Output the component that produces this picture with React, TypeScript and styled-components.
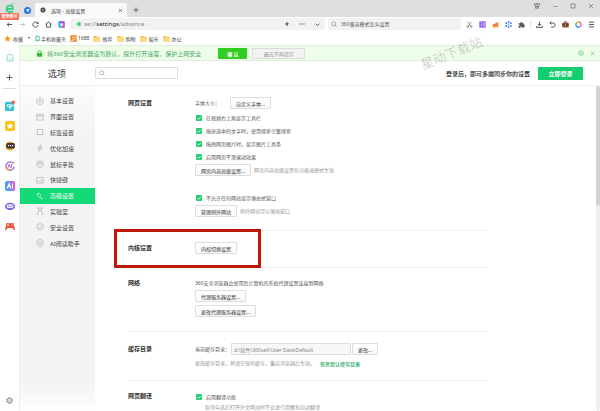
import React from "react";
import styled, { createGlobalStyle, css } from "styled-components";

const Global = createGlobalStyle`
  *, *::before, *::after { box-sizing: border-box; }
  html, body { margin: 0; overflow: hidden; }
  body, button, input {
    font-family: "Noto Sans", "Noto Sans CJK SC", sans-serif;
    font-size: 5px;
    color: #444;
  }
  button { padding: 0; border: 0; background: none; white-space: nowrap; }
  button, a { cursor: pointer; }
`;

const Browser = styled.div`
  display: flex;
  flex-direction: column;
  height: 100vh;
  background: #fff;
  overflow: hidden;
`;

/* ---- title bar ---- */
const TitleBar = styled.header`
  display: flex;
  align-items: flex-end;
  height: 17px;
  flex: none;
  background: #dfdfdf;
`;
const Account = styled.button`
  position: relative;
  width: 19px;
  height: 17px;
  display: flex;
  justify-content: center;
  align-items: flex-start;
  padding-top: 3px;
`;
const AccountBadge = styled.span`
  position: absolute;
  left: 0;
  top: 13px;
  width: 19px;
  height: 7px;
  line-height: 7px;
  font-size: 4px;
  font-weight: 700;
  text-align: center;
  color: #fff;
  background: #f5735c;
  z-index: 2;
`;
const PinnedTab = styled.button`
  width: 16px;
  height: 14px;
  display: grid;
  place-items: center;
`;
const Tab = styled.div`
  display: flex;
  align-items: center;
  gap: 5px;
  width: 92px;
  height: 14px;
  padding: 0 4px 0 5px;
  background: #f9f9f9;
  border-radius: 2px 2px 0 0;
`;
const TabTitle = styled.span`
  flex: 1;
  color: #444;
`;
const NewTab = styled.button`
  width: 17px;
  height: 14px;
  display: grid;
  place-items: center;
`;
const WindowControls = styled.div`
  display: flex;
  align-self: flex-start;
  margin-left: auto;
`;

const IconButton = styled.button<{ $w?: number; $h?: number }>`
  display: grid;
  place-items: center;
  flex: none;
  width: ${(p) => p.$w ?? 13}px;
  height: ${(p) => p.$h ?? 12}px;
`;

/* ---- toolbar ---- */
const Toolbar = styled.div`
  display: flex;
  align-items: center;
  height: 14px;
  flex: none;
  padding: 0 2px 0 3px;
`;
const Address = styled.div`
  flex: 1;
  display: flex;
  align-items: center;
  height: 12px;
  margin: 0 3px;
  padding-left: 5px;
  gap: 2px;
  background: #f2f2f2;
  border-radius: 2px;
`;
const Url = styled.span`
  flex: 1;
  font-size: 6px;
  color: #888;
  b { font-weight: 400; color: #222; }
`;
const Search = styled.label`
  display: flex;
  align-items: center;
  gap: 4px;
  width: 133px;
  height: 12px;
  padding-left: 3px;
  margin-right: 2px;
  background: #f2f2f2;
  border-radius: 2px;
`;
const BareInput = styled.input`
  flex: 1;
  min-width: 0;
  height: 10px;
  line-height: 10px;
  padding: 0;
  border: 0;
  outline: 0;
  background: none;
  color: #555;
`;
const Divider = styled.span`
  width: 1px;
  height: 6px;
  margin: 0 2px;
  background: #ddd;
`;

/* ---- bookmarks ---- */
const Bookmarks = styled.nav`
  display: flex;
  align-items: center;
  gap: 4px;
  height: 14px;
  flex: none;
  padding-left: 4px;
`;
const Bookmark = styled.a<{ $gap?: number }>`
  display: flex;
  align-items: center;
  gap: ${(p) => p.$gap ?? 1}px;
  color: #444;
  text-decoration: none;
`;

/* ---- side rail ---- */
const Main = styled.div`
  display: flex;
  flex: 1;
  min-height: 0;
`;
const Rail = styled.aside`
  display: flex;
  flex-direction: column;
  align-items: center;
  width: 20px;
  flex: none;
  border-right: 1px solid #eee;
  padding: 3px 0;
`;
const RailLine = styled.hr`
  width: 13px;
  height: 1px;
  margin: 2px 0 7px;
  border: 0;
  background: #ddd;
`;
const RailApps = styled.div`
  display: grid;
`;
const RailBottom = styled.div`
  margin-top: auto;
`;

/* ---- page ---- */
const Page = styled.div`
  position: relative;
  flex: 1;
  min-width: 0;
  display: flex;
  flex-direction: column;
`;
const Banner = styled.div`
  display: flex;
  align-items: center;
  height: 16px;
  flex: none;
  padding: 0 2px 0 16px;
  background: #effee9;
  border-top: 1px solid #e2efdf;
  border-bottom: 1px solid #dcefd8;
`;
const BannerText = styled.span`
  margin: 0 17px 0 4px;
  font-size: 6px;
  color: #43a568;
`;
const BannerButton = styled.button<{ $primary?: boolean }>`
  height: 11px;
  margin-right: 5px;
  border-radius: 1px;
  ${(p) =>
    p.$primary
      ? css`width: 29px; color: #fff; font-weight: 700; background: #31cc22;`
      : css`width: 53px; color: #999; background: #f3f3f3; border: 1px solid #d9dfd8;`}
`;
const BannerEnd = styled.div`
  display: flex;
  margin-left: auto;
`;
const PageHeader = styled.div`
  display: flex;
  align-items: center;
  height: 25px;
  flex: none;
  padding: 0 17px 0 28px;
  border-bottom: 1px solid #eee;
`;
const Title = styled.h1`
  width: 47px;
  margin: 0;
  font-size: 9px;
  font-weight: 400;
  color: #333;
`;
const OptionSearch = styled.label`
  display: flex;
  align-items: center;
  gap: 4px;
  width: 83px;
  height: 12px;
  padding-left: 3px;
  border: 1px solid #ddd;
  border-radius: 1px;
`;
const LoginText = styled.span`
  margin: 0 8px 0 auto;
  font-size: 6px;
  font-weight: 500;
  color: #222;
`;
const LoginButton = styled.button`
  width: 45px;
  height: 13px;
  border-radius: 1px;
  font-size: 6px;
  font-weight: 700;
  color: #fff;
  background: #13ce6f;
`;
const Body = styled.div`
  display: flex;
  flex: 1;
  min-height: 0;
`;
const Sidebar = styled.nav`
  width: 75px;
  flex: none;
  padding-top: 7px;
  background: linear-gradient(#fcfcfc, #f3f3f3 50px, #f3f3f3 calc(100% - 30px), #fff);
`;
const SideList = styled.ul`
  display: grid;
  grid-auto-rows: 1fr;
  height: 158px;
  margin: 0;
  padding: 0;
  list-style: none;
`;
const SideLink = styled.a<{ $active?: boolean }>`
  display: flex;
  align-items: center;
  gap: 6px;
  height: 100%;
  padding-left: 16px;
  font-size: 6px;
  text-decoration: none;
  color: ${(p) => (p.$active ? "#fff" : "#444")};
  background: ${(p) => (p.$active ? "#14d977" : "none")};
  svg { color: ${(p) => (p.$active ? "#bff5d9" : "#aaa")}; }
`;
const Content = styled.main`
  flex: 1;
  min-width: 0;
  padding: 0 108px 0 33px;
  overflow: hidden;
`;
const Section = styled.section<{ $top: number; $bottom: number }>`
  position: relative;
  display: grid;
  grid-template-columns: 67px 1fr;
  padding: ${(p) => p.$top}px 0 ${(p) => p.$bottom}px;
  border-bottom: 1px solid #f0f0f0;
`;
const SectionTitle = styled.h2`
  margin: 0;
  font-size: 6px;
  line-height: 12px;
  font-weight: 700;
  color: #333;
`;
const Fields = styled.div`
  display: flex;
  flex-direction: column;
`;
const Row = styled.div<{ $gap?: number; $before?: number }>`
  display: flex;
  align-items: center;
  min-height: 12px;
  gap: ${(p) => p.$gap ?? 3}px;
  margin-top: ${(p) => p.$before ?? 0}px;
  white-space: nowrap;
`;
const Text = styled.p`
  margin: 0;
  line-height: 12px;
  white-space: nowrap;
  color: #555;
`;
const Hint = styled.span<{ $indent?: boolean }>`
  line-height: 9px;
  color: #999;
  padding-left: ${(p) => (p.$indent ? 10 : 0)}px;
`;
const PlainButton = styled.button`
  height: 12px;
  padding: 0 5px;
  border: 1px solid #ddd;
  border-radius: 1px;
  background: linear-gradient(#fff, #f8f8f8);
  color: #333;
`;
const CheckLabel = styled.label<{ $before?: number }>`
  display: flex;
  align-items: center;
  gap: 4px;
  height: 13px;
  margin-top: ${(p) => p.$before ?? 0}px;
  padding-left: 1px;
  white-space: nowrap;
  color: #555;
`;
const Checkbox = styled.input`
  appearance: none;
  width: 6px;
  height: 6px;
  margin: 0;
  border-radius: 1px;
  border: 1px solid #bbb;
  &:checked {
    border: 0;
    background: #1fd170 url("data:image/svg+xml,%3Csvg xmlns='http://www.w3.org/2000/svg' viewBox='0 0 12 12'%3E%3Cpath d='M2.5 6l2.6 2.6 4.5-5' fill='none' stroke='white' stroke-width='1.6'/%3E%3C/svg%3E") center / 6px 6px no-repeat;
  }
`;
const PathInput = styled.input`
  width: 120px;
  height: 12px;
  line-height: 10px;
  padding: 0 2px;
  border: 1px solid #ddd;
  background: #f7f7f7;
  color: #888;
`;
const RestoreLink = styled.a`
  margin-left: 2px;
  color: #2cab68;
  text-decoration: none;
  font-weight: 500;
`;
const Highlight = styled.div`
  position: absolute;
  left: -14px;
  top: -2px;
  width: 147px;
  height: 39px;
  border: 3px solid #bd1809;
  pointer-events: none;
  z-index: 1;
`;
const Scrollbar = styled.div`
  width: 4px;
  flex: none;
  background: #efefef;
  border-radius: 2px;
`;
const Thumb = styled.div`
  height: 37%;
  border-radius: 2px;
  background: #d2d2d2;
`;
const Watermark = styled.span`
  position: absolute;
  right: 116px;
  top: 0;
  font-family: "Noto Sans CJK SC", sans-serif;
  font-size: 13px;
  line-height: 16px;
  color: rgba(80, 80, 80, 0.27);
  transform: rotate(-22deg);
  pointer-events: none;
`;

/* ---- icons ---- */
const shapes: Record<string, React.ReactNode> = {
  back: <path d="M21 12H4M11 5l-7 7 7 7" />,
  forward: <path d="M3 12h17M13 5l7 7-7 7" />,
  reload: <path d="M20 8a9 9 0 1 0 1 6M21 3v6h-6" />,
  house: <path d="M2 11L12 3l10 8M5 9v12h14V9" />,
  homeRail: <><path d="M3 10a9 9 0 0 1 18 0v11H3z" /><path d="M8 14q4 4 8 0" /></>,
  plus: <path d="M12 2v20M2 12h20" />,
  close: <path d="M4 4l16 16M20 4L4 20" />,
  minus: <path d="M3 12h18" />,
  square: <path d="M4 4h16v16H4z" />,
  skin: <path d="M2 3h20v6h-4v12H6V9H2zM8 3q4 6 8 0M10 12h4v5h-4z" />,
  search: <><circle cx="11" cy="11" r="8" /><path d="M17 17l5 5" /></>,
  bolt: <path d="M14 1L4 14h7l-2 9 11-14h-8z" fill="currentColor" stroke="none" />,
  flash: <path d="M14 2L5 13h6l-2 9 10-12h-7z" />,
  dots: <path d="M2 12h4M10 12h4M18 12h4" strokeWidth="4" />,
  chevron: <path d="M3 8l9 9 9-9" />,
  caret: <path d="M4 8h16l-8 9z" fill="currentColor" stroke="none" />,
  scissors: <><path d="M5 2l11 15M19 2L8 17" /><circle cx="6" cy="19" r="3" /><circle cx="18" cy="19" r="3" /></>,
  download: <path d="M12 2v14M6 10l6 6 6-6M2 17v5h20v-5" />,
  undo: <path d="M8 2L3 7l5 5M3 7h11a7 7 0 0 1 0 14H7" />,
  menu: <path d="M3 4h18M3 12h18M3 20h18" />,
  puzzle: <path d="M2 8h6V6a3 3 0 0 1 6 0v2h6v5h1a3 3 0 0 1 0 6h-1v4h-7v-3a2 2 0 0 0-4 0v3H2v-7h2a2 2 0 0 0 0-4H2z" fill="currentColor" stroke="none" />,
  gear: <><circle cx="12" cy="12" r="9" strokeWidth="5" strokeDasharray="4 3" /><circle cx="12" cy="12" r="8" /><circle cx="12" cy="12" r="3" /></>,
  gearDark: <><circle cx="12" cy="12" r="6" strokeWidth="6" /><circle cx="12" cy="12" r="9.5" strokeWidth="4" strokeDasharray="4 3.5" /></>,
  hexGear: <><path d="M8 2h8l6 6v8l-6 6H8l-6-6V8z" /><path d="M9 8v8M12 7v10M15 8v8" /></>,
  windowed: <path d="M2 4h20v17H2zM2 9h20" />,
  tab: <path d="M4 20V4h16v16M1 20h22" />,
  mouse: <path d="M3 9q0-6 9-6t9 6v5q0 8-9 8t-9-8zM3 11h18M12 3v8" />,
  keys: <path d="M2 4h20v17H2zM7 17v-3M12 17v-4M17 17V9" />,
  wrench: <path d="M3 9q0-6 6-6l4 4q2 4-1 6l8 7-2 2-8-7q-4 1-7-6zM3 9l5-1 1-5" />,
  flask: <path d="M3 3h18M8 3v9L4 21M16 3v9l4 9M3 21h5M16 21h5M8 12h8" />,
  shield: <path d="M12 2l9 3v8q-2 7-9 9-7-2-9-9V5zM7 12l4 4 7-8" />,
  lock: <><path d="M3 10h18v13H3z" fill="#39bd2e" stroke="none" /><path d="M7 11V7a5 5 0 0 1 10 0v4" stroke="#39bd2e" strokeWidth="3" /></>,
  browserE: <><path d="M5 14h14q0-8-7-8-8 0-8 8 1 8 8 8 5 0 7-3" stroke="#2fce7b" strokeWidth="4" /><path d="M1 20Q4 6 23 1" stroke="#57d98e" strokeWidth="2" /></>,
  compass: <><circle cx="12" cy="12" r="12" fill="#2478e6" stroke="none" /><path d="M19 5l-5 14-3-6-6-3z" fill="#fff" stroke="none" /></>,
  prism: <><rect x="1" y="1" width="22" height="22" rx="4" fill="#22b6f2" stroke="none" /><path d="M12 1h7q4 0 4 4v14q0 4-4 4h-7z" fill="#f04fa6" stroke="none" /><path d="M3 2h18L12 9z" fill="#8a58f2" stroke="none" /><circle cx="12" cy="13" r="5" fill="#d9f2ff" stroke="none" /></>,
  siteDot: <><circle cx="12" cy="12" r="10" fill="#a4ebbd" stroke="none" /><circle cx="12" cy="12" r="6" fill="#2ecb68" stroke="none" /></>,
  star: <path d="M12 1l3.4 7.4 8 .9-6 5.4 1.7 8L12 18.7 4.9 22.7l1.7-8-6-5.4 8-.9z" fill="#ff961c" stroke="none" />,
  phone: <path d="M4 1h16v22H4zM9 19h6" stroke="#36bd88" strokeWidth="4" />,
  ali: <><path d="M1 1h22v22H1z" fill="#f58220" stroke="none" /><path d="M4 18q14 1 14-12M7 8h6" stroke="#fff" strokeWidth="3" /></>,
  folder: <><path d="M1 3h9l2 3h11v16H1z" fill="#f3bf4f" stroke="none" /><path d="M1 9h22v13H1z" fill="#fbd980" stroke="none" /></>,
  purple: <><path d="M1 1h22v22H1z" fill="#9067ec" stroke="none" /><path d="M6 7h5M6 12h5M6 17h5M15 6v12M19 6v12" stroke="#ddcfff" /></>,
  fox: <path d="M1 22l3-13 6 1 4-6 2 3 6-4-1 19h-4l-2-5-3 5H9l-2-4-2 4z" fill="#f5822f" stroke="none" />,
  molecule: <><path d="M12 5v14M5 8l14 8M5 16l14-8" stroke="#8eb4f3" /><g fill="#2c6ddd" stroke="none"><circle cx="12" cy="3" r="3" /><circle cx="12" cy="21" r="3" /><circle cx="4" cy="7" r="3" /><circle cx="20" cy="7" r="3" /><circle cx="4" cy="17" r="3" /><circle cx="20" cy="17" r="3" /></g></>,
  briefcase: <><path d="M8 6V3h8v3" stroke="#6a3b25" /><path d="M1 6h22v16H1z" fill="#86492e" stroke="none" /><path d="M1 12h22" stroke="#55301f" /><path d="M10 11h4v4h-4z" fill="#e9c07a" stroke="none" /></>,
  rainbow: <><path d="M12 3a9 9 0 0 1 8 5" stroke="#f3564d" strokeWidth="5" /><path d="M20 8a9 9 0 0 1-4 12" stroke="#f06ac0" strokeWidth="5" /><path d="M16 20a9 9 0 0 1-12-4" stroke="#3c8df2" strokeWidth="5" /><path d="M4 16A9 9 0 0 1 6 5" stroke="#34c878" strokeWidth="5" /><path d="M6 5q3-2 6-2" stroke="#f7a930" strokeWidth="5" /></>,
  aqua: <><rect x="0" y="2" width="22" height="22" rx="4" fill="#30c1d5" stroke="none" /><path d="M5 9h7v8M12 7v13M5 9v5h11V9h3v5" stroke="#fff" /><circle cx="20" cy="3" r="4" fill="#f55b4e" stroke="none" /></>,
  yellowStar: <><rect x="0" y="0" width="24" height="24" rx="4" fill="#fbc114" stroke="none" /><path d="M12 4l2.4 5.2 5.6.7-4.2 3.8 1.2 5.6L12 16.5 7 19.3l1.2-5.6L4 9.9l5.6-.7z" fill="#fff" stroke="none" /></>,
  chat: <><circle cx="12" cy="12" r="11" fill="#f3ae2d" stroke="none" /><rect x="3" y="5" width="21" height="13" rx="4" fill="#3b342f" stroke="none" /><path d="M7 11h3M12 11h3M17 11h3" stroke="#fff" strokeWidth="3" /></>,
  aiRing: <><path d="M20 6a10 10 0 1 0 2 8" stroke="#a35bea" strokeWidth="3" /><path d="M2 13a10 10 0 0 0 8 9" stroke="#f0a04a" strokeWidth="3" /><path d="M7 16l3-8 3 8M16 8v8" stroke="#8c45dc" /><circle cx="21" cy="4" r="2" fill="#f4aa3c" stroke="none" /></>,
  aiBox: <><rect x="0" y="0" width="24" height="24" rx="5" fill="#4a9cf4" stroke="none" /><path d="M12 0h7q5 0 5 5v14q0 5-5 5h-3z" fill="#d35fd8" stroke="none" /><path d="M5 18l5-12 4 12M6 14h7M18 6v12" stroke="#fff" strokeWidth="2.5" /></>,
  robot: <><ellipse cx="12" cy="13" rx="12" ry="9" fill="#7a63dc" stroke="none" /><rect x="4" y="8" width="16" height="9" rx="4" fill="#eeeaff" stroke="none" /><path d="M9 11v3M15 11v3" stroke="#4b37ae" /></>,
  gamepad: <><path d="M4 4q8 3 16 0l4 17q-4 2-6-4H6q-2 6-6 4z" fill="#ea5136" stroke="none" /><path d="M5 10h5M7.5 7.5v5M15 10h4" stroke="#ffd2c4" /></>,
};

const Icon = ({ name, size = 7, color = "currentColor", weight = 2 }: { name: string; size?: number; color?: string; weight?: number }) => (
  <svg width={size} height={size} viewBox="0 0 24 24" fill="none" stroke="currentColor" color={color} strokeWidth={weight} aria-hidden="true" overflow="visible">
    {shapes[name]}
  </svg>
);

const navButtons = [
  ["back", "后退", "#444"],
  ["forward", "前进", "#bbb"],
  ["reload", "刷新", "#444"],
  ["house", "主页", "#444"],
  ["prism", "AI 主页", "#444"],
];
const tools = [
  ["scissors", "截图"],
  ["purple", "翻译"],
  ["fox", "游戏"],
  ["molecule", "扩展工具"],
  ["puzzle", "扩展"],
];
const moreTools = [
  ["download", "下载"],
  ["undo", "恢复"],
  ["briefcase", "工作台"],
  ["rainbow", "AI"],
  ["menu", "菜单"],
];
const railApps = ["aqua", "yellowStar", "chat", "aiRing", "aiBox", "robot", "gamepad"];
const sideItems = [
  ["hexGear", "基本设置"],
  ["windowed", "界面设置"],
  ["tab", "标签设置"],
  ["flash", "优化加速"],
  ["mouse", "鼠标手势"],
  ["keys", "快捷键"],
  ["wrench", "高级设置"],
  ["flask", "实验室"],
  ["shield", "安全设置"],
  ["hexGear", "AI阅读助手"],
];
const pageChecks = [
  "在视频右上角显示工具栏",
  "拖放选中的文字时，使用搜索引擎搜索",
  "拖拽网页图片时，显示图片工具条",
  "启用网页平滑滚动效果",
];

const Check = ({ children, before }: { children: React.ReactNode; before?: number }) => (
  <CheckLabel $before={before}>
    <Checkbox type="checkbox" defaultChecked />
    {children}
  </CheckLabel>
);

export default function App() {
  return (
    <Browser>
      <Global />
      <TitleBar>
        <Account aria-label="登录账号">
          <Icon name="browserE" size={10} />
          <AccountBadge>登录账号</AccountBadge>
        </Account>
        <PinnedTab aria-label="导航"><Icon name="compass" /></PinnedTab>
        <Tab>
          <Icon name="gearDark" size={6} color="#444" />
          <TabTitle>选项 - 高级设置</TabTitle>
          <IconButton $w={5} aria-label="关闭标签"><Icon name="close" size={5} weight={3} /></IconButton>
        </Tab>
        <NewTab aria-label="新标签"><Icon name="plus" size={6} weight={3} /></NewTab>
        <WindowControls>
          <IconButton $w={18} aria-label="皮肤"><Icon name="skin" size={6} /></IconButton>
          <IconButton $w={18} aria-label="最小化"><Icon name="minus" size={5} /></IconButton>
          <IconButton $w={18} aria-label="最大化"><Icon name="square" size={6} /></IconButton>
          <IconButton $w={18} aria-label="关闭"><Icon name="close" size={6} /></IconButton>
        </WindowControls>
      </TitleBar>

      <Toolbar>
        {navButtons.map(([icon, label, color]) => (
          <IconButton key={icon} aria-label={label}><Icon name={icon} size={7} color={color} weight={3} /></IconButton>
        ))}
        <Address>
          <Icon name="siteDot" size={6} />
          <Url>se://<b>settings</b>/advance</Url>
          <IconButton aria-label="极速模式"><Icon name="bolt" size={6} /></IconButton>
          <IconButton aria-label="更多"><Icon name="dots" size={6} /></IconButton>
          <IconButton $w={15} aria-label="展开"><Icon name="chevron" size={5} weight={4} /></IconButton>
        </Address>
        <Search>
          <Icon name="search" size={6} color="#666" />
          <BareInput aria-label="搜索" defaultValue="360兼容模式怎么设置" />
        </Search>
        {tools.map(([icon, label]) => (
          <IconButton key={icon} aria-label={label}><Icon name={icon} size={7} color="#555" /></IconButton>
        ))}
        <Divider />
        {moreTools.map(([icon, label]) => (
          <IconButton key={icon} aria-label={label}><Icon name={icon} size={7} color="#444" weight={3} /></IconButton>
        ))}
      </Toolbar>

      <Bookmarks aria-label="收藏栏">
        <Bookmark href="#fav" $gap={2}><Icon name="star" />收藏</Bookmark>
        <Icon name="caret" size={4} color="#444" />
        <Bookmark href="#mobile"><Icon name="phone" size={5} />手机收藏夹</Bookmark>
        <Bookmark href="#1688"><Icon name="ali" />1688</Bookmark>
        {["推荐", "购物", "娱乐", "办公"].map((name) => (
          <Bookmark key={name} href="#folder" $gap={2}><Icon name="folder" />{name}</Bookmark>
        ))}
      </Bookmarks>

      <Main>
        <Rail>
          <IconButton $h={20} aria-label="主页"><Icon name="homeRail" size={8} color="#5cc998" /></IconButton>
          <IconButton $h={18} aria-label="添加"><Icon name="plus" color="#444" weight={3} /></IconButton>
          <RailLine />
          <RailApps>
            {railApps.map((icon) => (
              <IconButton key={icon} $h={20} aria-label={icon}><Icon name={icon} size={10} /></IconButton>
            ))}
          </RailApps>
          <RailBottom>
            <IconButton $h={16} aria-label="设置"><Icon name="gear" color="#888" /></IconButton>
          </RailBottom>
        </Rail>

        <Page>
          <Banner>
            <Icon name="lock" />
            <BannerText>将360安全浏览器设为默认，提升打开速度，保护上网安全</BannerText>
            <BannerButton $primary>确 认</BannerButton>
            <BannerButton>最近不再提示</BannerButton>
            <BannerEnd>
              <IconButton aria-label="提示设置"><Icon name="gear" size={6} color="#86d39a" /></IconButton>
              <IconButton $w={11} aria-label="关闭提示"><Icon name="close" size={5} color="#49b768" weight={3} /></IconButton>
            </BannerEnd>
          </Banner>
          <PageHeader>
            <Title>选项</Title>
            <OptionSearch>
              <Icon name="search" size={6} color="#777" />
              <BareInput aria-label="搜索选项" />
            </OptionSearch>
            <LoginText>登录后，即可多端同步你的设置</LoginText>
            <LoginButton>立即登录</LoginButton>
          </PageHeader>
          <Body>
            <Sidebar aria-label="选项分类">
              <SideList>
                {sideItems.map(([icon, label]) => (
                  <li key={label}>
                    <SideLink href="#settings" $active={label === "高级设置"}>
                      <Icon name={icon} size={8} />
                      {label}
                    </SideLink>
                  </li>
                ))}
              </SideList>
            </Sidebar>

            <Content>
              <Section $top={11} $bottom={13}>
                <SectionTitle>网页设置</SectionTitle>
                <Fields>
                  <Row $gap={10}>
                    <Text>字体大小：</Text>
                    <PlainButton>自定义字体...</PlainButton>
                  </Row>
                  <Row $before={2}>
                    <Fields>{pageChecks.map((label) => <Check key={label}>{label}</Check>)}</Fields>
                  </Row>
                  <Row $before={1}>
                    <PlainButton>网页内容高级设置...</PlainButton>
                    <Hint>网页内容高级设置仅对极速模式生效</Hint>
                  </Row>
                  <Check before={15}>不允许任何网站显示弹出式窗口</Check>
                  <Row $before={1}>
                    <PlainButton>管理例外网站</PlainButton>
                    <Hint>例外网站可以弹出窗口</Hint>
                  </Row>
                </Fields>
              </Section>

              <Section $top={11} $bottom={13}>
                <SectionTitle>内核设置</SectionTitle>
                <Row><PlainButton>内核切换设置</PlainButton></Row>
                <Highlight />
              </Section>

              <Section $top={9} $bottom={14}>
                <SectionTitle>网络</SectionTitle>
                <Fields>
                  <Text>360安全浏览器会使用您计算机的系统代理设置连接到网络</Text>
                  <Row $before={1}><PlainButton>代理服务器设置...</PlainButton></Row>
                  <Row $before={3}><PlainButton>更改代理服务器设置...</PlainButton></Row>
                </Fields>
              </Section>

              <Section $top={11} $bottom={11}>
                <SectionTitle>缓存目录</SectionTitle>
                <Fields>
                  <Row $gap={1}>
                    <Text as="label" htmlFor="cache-path">当前缓存目录：</Text>
                    <PathInput id="cache-path" readOnly value="d:\软件\360se6\User Data\Default" />
                    <PlainButton>更改...</PlainButton>
                  </Row>
                  <Row $before={2}>
                    <Hint>更改缓存目录，将清空现有缓存，重启浏览器后生效。</Hint>
                    <RestoreLink href="#restore">恢复默认缓存目录</RestoreLink>
                  </Row>
                </Fields>
              </Section>

              <Section $top={9} $bottom={12}>
                <SectionTitle>网页翻译</SectionTitle>
                <Fields>
                  <Check>启用翻译功能</Check>
                  <Hint $indent>取消勾选后打开外文网站时不会进行提醒和自动翻译</Hint>
                </Fields>
              </Section>
            </Content>
            <Scrollbar><Thumb /></Scrollbar>
          </Body>
          <Watermark>星动下载站</Watermark>
        </Page>
      </Main>
    </Browser>
  );
}
